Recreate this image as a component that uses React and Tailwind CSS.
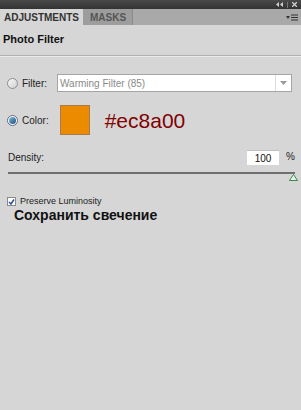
export default function App() {
  return (
    <div className="w-[301px] h-[410px] bg-[#d6d6d6] flex flex-col overflow-hidden" style={{ fontFamily: '"Liberation Sans", Arial, sans-serif' }}>
      {/* Title strip */}
      <div className="h-[9px] bg-gradient-to-b from-[#4a4a4a] to-[#333] flex items-center justify-end pr-1 gap-1">
        <svg width="7" height="5" viewBox="0 0 7 5"><path d="M3 0L0 2.5 3 5zM7 0L4 2.5 7 5z" fill="#cfcfcf" /></svg>
        <div className="w-px h-[6px] bg-[#777]" />
        <svg width="5" height="5" viewBox="0 0 5 5"><path d="M0 0L5 5M5 0L0 5" stroke="#cfcfcf" strokeWidth="1.3" /></svg>
      </div>

      {/* Tabs */}
      <div className="h-[17px] bg-[#a9a9a9] flex items-stretch border-b border-[#d6d6d6]">
        <div className="w-[83px] bg-[#d6d6d6] flex items-center pl-[4px] text-[10px] font-bold text-[#333]">ADJUSTMENTS</div>
        <div className="w-[50px] bg-[#9d9d9d] border-r border-[#8a8a8a] flex items-center pl-[7px] text-[10px] font-bold text-[#555]">MASKS</div>
        <div className="flex-1 flex items-center justify-end pr-[3px] gap-[1px]">
          <svg width="4" height="3" viewBox="0 0 4 3"><path d="M0 0h4L2 3z" fill="#333" /></svg>
          <svg width="7" height="7" viewBox="0 0 7 7"><path d="M0 1h7M0 3.5h7M0 6h7" stroke="#333" strokeWidth="1" /></svg>
        </div>
      </div>

      {/* Header */}
      <div className="h-[30px] flex items-center pl-[3px] pb-[3px] text-[11px] font-bold text-[#111] border-b border-[#b0b0b0]">Photo Filter</div>
      <div className="h-px bg-[#eaeaea]" />

      {/* Filter row */}
      <div className="mt-[17px] flex items-center h-[18px] pl-[7px] pr-[9px]">
        <div className="w-[11px] h-[11px] rounded-full border border-[#8e8e8e] bg-gradient-to-br from-[#fafafa] to-[#cfcfcf]" />
        <span className="ml-[4px] text-[10px] text-[#222]">Filter:</span>
        <div className="ml-[10px] flex-1 h-[18px] bg-white border border-[#a5a5a5] flex items-center">
          <span className="pl-[2px] text-[10px] text-[#8a8a8a] flex-1">Warming Filter (85)</span>
          <div className="w-[16px] h-full border-l border-[#dcdcdc] flex items-center justify-center">
            <svg width="7" height="4" viewBox="0 0 7 4"><path d="M0 0h7L3.5 4z" fill="#9a9a9a" /></svg>
          </div>
        </div>
      </div>

      {/* Color row */}
      <div className="mt-[13px] flex items-center h-[30px] pl-[7px]">
        <div className="w-[11px] h-[11px] rounded-full border border-[#5a6a7a] bg-white flex items-center justify-center">
          <div className="w-[7px] h-[7px] rounded-full bg-gradient-to-br from-[#7fc0e8] to-[#1a4e7a]" />
        </div>
        <span className="ml-[4px] text-[10px] text-[#222]">Color:</span>
        <div className="ml-[11px] w-[30px] h-[30px] bg-[#ec8a00] border border-[#a97a4a]" />
        <span className="ml-[15px] text-[21px] text-[#800000] leading-none">#ec8a00</span>
      </div>

      {/* Density */}
      <div className="mt-[15px] flex items-center h-[15px] pl-[8px] pr-[6px]">
        <span className="text-[10px] text-[#222] flex-1">Density:</span>
        <div className="w-[32px] h-[15px] bg-white flex items-center justify-center text-[10px] text-[#111] border-t border-[#c0c0c0]">100</div>
        <span className="ml-[7px] text-[10px] text-[#222] -mt-[3px]">%</span>
      </div>
      <div className="mt-[7px] pl-[8px] pr-[6px] relative">
        <div className="h-[2px] bg-[#6f6f6f]" />
        <svg className="absolute right-[3px] top-[2px]" width="9" height="7" viewBox="0 0 9 7">
          <path d="M4.5 0.5L8.5 6.5H0.5z" fill="#eaf5ea" stroke="#3a8a4a" strokeWidth="1" />
        </svg>
      </div>

      {/* Preserve Luminosity */}
      <div className="mt-[22px] flex items-center pl-[7px] h-[11px]">
        <div className="w-[9px] h-[9px] bg-white border border-[#8a8a8a] flex items-center justify-center">
          <svg width="7" height="6" viewBox="0 0 7 6"><path d="M1 3l2 2 3-4.5" stroke="#2a4d9a" strokeWidth="1.5" fill="none" /></svg>
        </div>
        <span className="ml-[4px] text-[9px] leading-[11px] text-[#222]">Preserve Luminosity</span>
      </div>
      <div className="pl-[14px] text-[14px] font-bold text-[#111] leading-[16px]">Сохранить свечение</div>
    </div>
  )
}
